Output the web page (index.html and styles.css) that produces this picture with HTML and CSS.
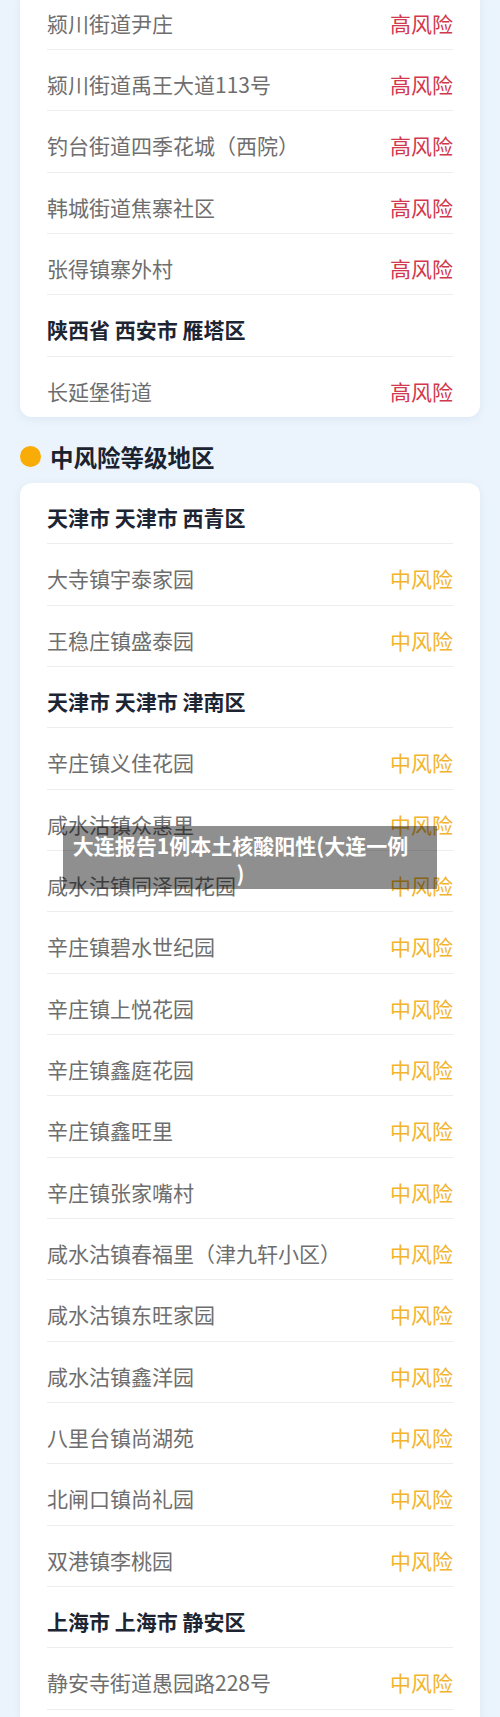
FILE: index.html
```html
<!DOCTYPE html>
<html lang="zh-CN">
<head>
    <meta charset="UTF-8">
    <meta name="viewport" content="width=device-width, initial-scale=1.0">
    <title>中高风险地区</title>
    <link rel="stylesheet" href="styles.css">
</head>
<body>
    <div class="page">
        <div class="card card-top">
            <div class="row"><span class="place">颍川街道尹庄</span><span class="level high">高风险</span></div>
            <div class="row"><span class="place">颍川街道禹王大道113号</span><span class="level high">高风险</span></div>
            <div class="row"><span class="place">钓台街道四季花城（西院）</span><span class="level high">高风险</span></div>
            <div class="row"><span class="place">韩城街道焦寨社区</span><span class="level high">高风险</span></div>
            <div class="row"><span class="place">张得镇寨外村</span><span class="level high">高风险</span></div>
            <div class="row city">陕西省 西安市 雁塔区</div>
            <div class="row"><span class="place">长延堡街道</span><span class="level high">高风险</span></div>
        </div>

        <h2 class="section-title"><span class="dot"></span>中风险等级地区</h2>

        <div class="card card-open">
            <div class="row city">天津市 天津市 西青区</div>
            <div class="row"><span class="place">大寺镇宇泰家园</span><span class="level mid">中风险</span></div>
            <div class="row"><span class="place">王稳庄镇盛泰园</span><span class="level mid">中风险</span></div>
            <div class="row city">天津市 天津市 津南区</div>
            <div class="row"><span class="place">辛庄镇义佳花园</span><span class="level mid">中风险</span></div>
            <div class="row"><span class="place">咸水沽镇众惠里</span><span class="level mid">中风险</span></div>
            <div class="row"><span class="place">咸水沽镇同泽园花园</span><span class="level mid">中风险</span></div>
            <div class="row"><span class="place">辛庄镇碧水世纪园</span><span class="level mid">中风险</span></div>
            <div class="row"><span class="place">辛庄镇上悦花园</span><span class="level mid">中风险</span></div>
            <div class="row"><span class="place">辛庄镇鑫庭花园</span><span class="level mid">中风险</span></div>
            <div class="row"><span class="place">辛庄镇鑫旺里</span><span class="level mid">中风险</span></div>
            <div class="row"><span class="place">辛庄镇张家嘴村</span><span class="level mid">中风险</span></div>
            <div class="row"><span class="place">咸水沽镇春福里（津九轩小区）</span><span class="level mid">中风险</span></div>
            <div class="row"><span class="place">咸水沽镇东旺家园</span><span class="level mid">中风险</span></div>
            <div class="row"><span class="place">咸水沽镇鑫洋园</span><span class="level mid">中风险</span></div>
            <div class="row"><span class="place">八里台镇尚湖苑</span><span class="level mid">中风险</span></div>
            <div class="row"><span class="place">北闸口镇尚礼园</span><span class="level mid">中风险</span></div>
            <div class="row"><span class="place">双港镇李桃园</span><span class="level mid">中风险</span></div>
            <div class="row city">上海市 上海市 静安区</div>
            <div class="row"><span class="place">静安寺街道愚园路228号</span><span class="level mid">中风险</span></div>
        </div>
    </div>

    <div class="caption">大连报告1例本土核酸阳性(大连一例)</div>
</body>
</html>
```

FILE: styles.css
```css
body {
    margin: 0;
    background: #ebf4fc;
    font-family: "Noto Sans CJK SC", "Noto Sans", sans-serif;
    overflow: hidden;
}
.page {
    padding: 0 20px;
}
.card {
    background: #fff;
    border-radius: 12px;
    padding: 0 27px;
    box-shadow: 0 2px 8px rgba(120, 150, 190, 0.12);
}
/* list is cut by the top edge of the screen */
.card-top {
    margin-top: -11.33px;
}
/* list continues below the bottom edge */
.card-open {
    border-radius: 12px 12px 0 0;
    padding-bottom: 10px;
}
.row {
    display: flex;
    justify-content: space-between;
    align-items: center;
    padding: 23px 0 15.33px;
    line-height: 22px;
    font-size: 21px;
    border-bottom: 1px solid #ededed;
}
.card-top .row:last-child {
    border-bottom: none;
}
.place {
    color: #6e6e6e;
}
.level.high {
    color: #d2384b;
}
.level.mid {
    color: #f2b42d;
}
.city {
    color: #1d2532;
    font-weight: bold;
}
.section-title {
    display: flex;
    align-items: center;
    gap: 9px;
    margin: 28px 0 14px;
    height: 24px;
    font-size: 23.5px;
    font-weight: bold;
    color: #1b2330;
}
.dot {
    width: 21px;
    height: 21px;
    border-radius: 50%;
    background: #f9ab06;
}

/* news caption laid over the screenshot */
.caption {
    position: absolute;
    left: 63px;
    top: 826px;
    width: 374px;
    height: 63px;
    box-sizing: border-box;
    padding: 5px 28px 2px 9px;
    background: rgba(0, 0, 0, 0.44);
    color: #fff;
    font-size: 21px;
    font-weight: bold;
    line-height: 28px;
    text-align: center;
    line-break: anywhere;
}
```
